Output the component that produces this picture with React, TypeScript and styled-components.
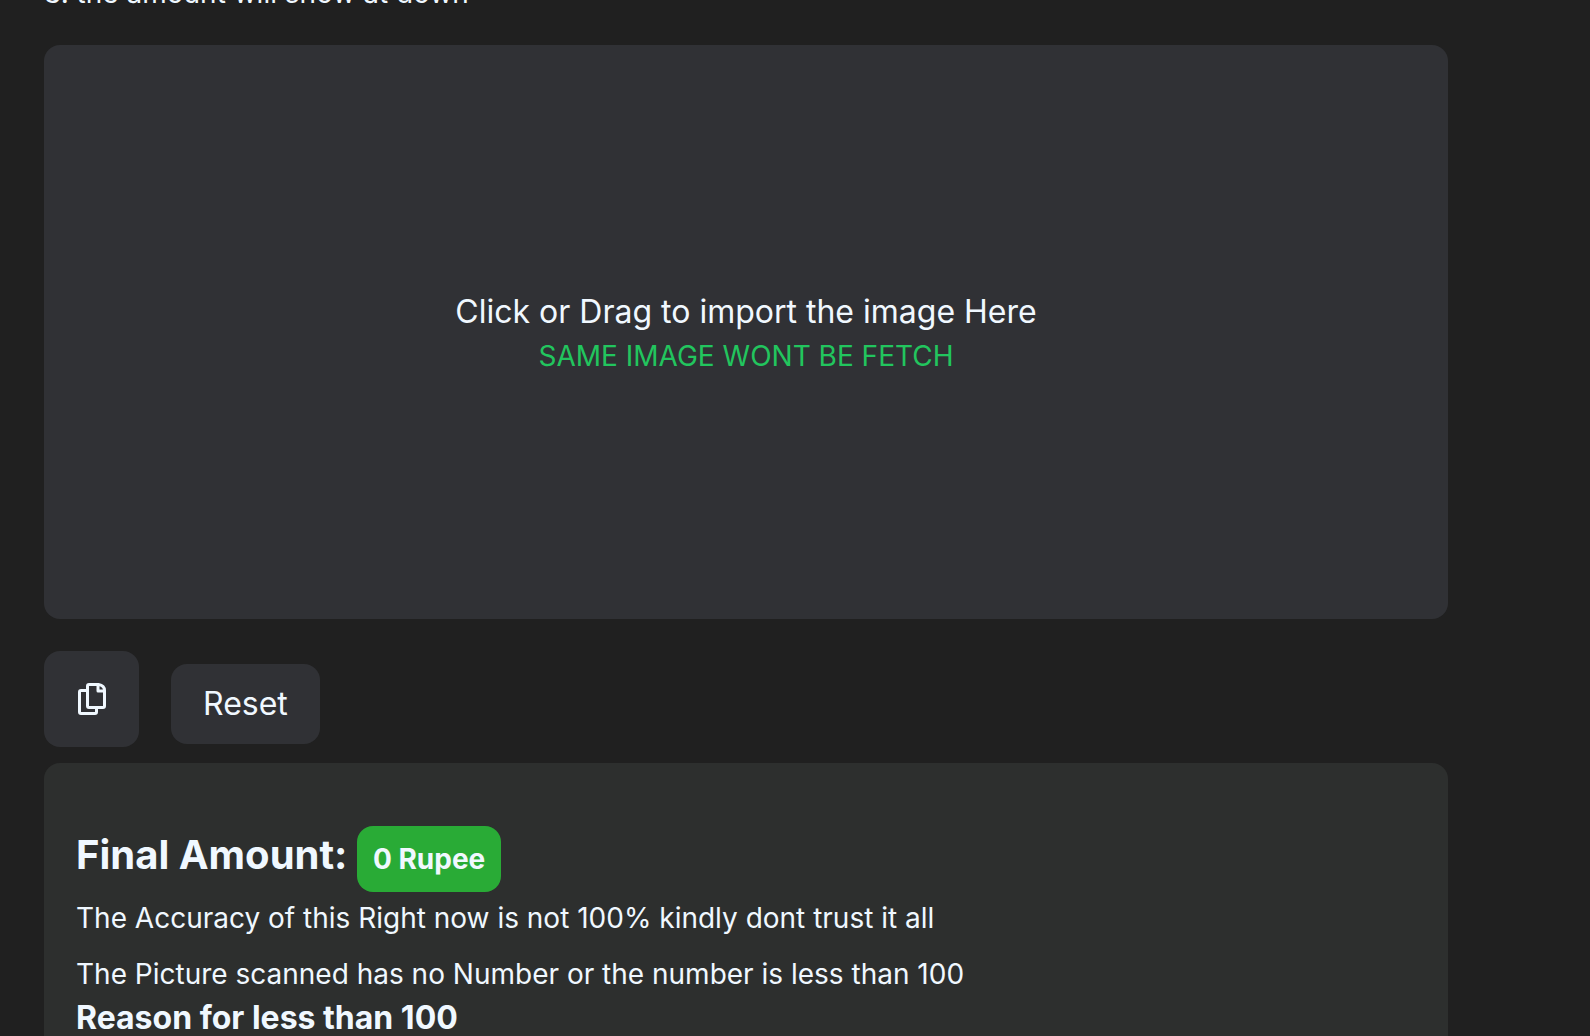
import React, { useState } from "react";
import styled, { createGlobalStyle } from "styled-components";

const GlobalStyle = createGlobalStyle`
  *, *::before, *::after { box-sizing: border-box; }
  html, body, #root { height: 100%; }
  body {
    margin: 0;
    overflow: hidden;
    background: #202020;
    color: aliceblue;
    font-family: Inter, "Liberation Sans", sans-serif;
    font-size: 28px;
    line-height: 40px;
  }
`;

const Viewport = styled.div`
  height: 100%;
  overflow: hidden;
`;

const Page = styled.main`
  display: flex;
  flex-direction: column;
  margin-top: -27px;
  padding: 0 142px 0 44px;
`;

const Step = styled.p`
  margin: 0 0 32px;
`;

const DropZone = styled.label`
  display: flex;
  flex-direction: column;
  align-items: center;
  justify-content: center;
  min-height: 574px;
  border-radius: 16px;
  background: #303135;
  cursor: pointer;
`;

const FileInput = styled.input`
  position: absolute;
  width: 1px;
  height: 1px;
  opacity: 0;
`;

const DropTitle = styled.span`
  font-size: 32px;
  line-height: 48px;
`;

const DropNote = styled.span`
  color: #22c55e;
`;

const Actions = styled.div`
  display: flex;
  align-items: baseline;
  gap: 32px;
  margin: 32px 0 16px;
`;

const Button = styled.button`
  padding: 16px 32px;
  border: 0;
  border-radius: 16px;
  background: #303135;
  color: inherit;
  font: inherit;
  font-size: 32px;
  line-height: 48px;
  cursor: pointer;
`;

const IconButton = styled(Button)`
  padding: 32px;
  line-height: 0;
`;

const Result = styled.section`
  padding: 64px 32px;
  border-radius: 16px;
  background: #2d2f2e;
`;

const Total = styled.h1`
  margin: 0 0 15px;
  font-size: 40px;
  line-height: 56px;
  font-weight: 700;
`;

const Amount = styled.span`
  padding: 16px;
  border-radius: 16px;
  background: #29ab36;
  font-size: 28px;
  line-height: 40px;
`;

const Note = styled.p`
  margin: 0;

  & + & { margin-top: 16px; }
`;

const Reason = styled.h2`
  margin: 0;
  font-size: 32px;
  line-height: 48px;
  font-weight: 700;
`;

function CopyIcon() {
  return (
    <svg width="31" height="32" viewBox="0 0 31 32" fill="none" stroke="currentColor" strokeWidth="3" strokeLinejoin="round" aria-hidden="true">
      <path d="M11.5 7.5H5a1.5 1.5 0 0 0-1.5 1.5V29A1.5 1.5 0 0 0 5 30.5H19A1.5 1.5 0 0 0 20.5 29V25" />
      <path d="M13 1.5H22.5Q28.500 2.500 28.5 7.5V23A1.5 1.5 0 0 1 27 24.5H13A1.5 1.5 0 0 1 11.5 23V3A1.5 1.5 0 0 1 13 1.5Z" />
      <path d="M22 2V8H28" />
    </svg>
  );
}

export default function App() {
  const [amount, setAmount] = useState(0);

  return (
    <Viewport>
      <GlobalStyle />
      <Page>
        <Step>3. the amount will show at down</Step>
        <DropZone htmlFor="image">
          <FileInput id="image" type="file" accept="image/*" />
          <DropTitle>Click or Drag to import the image Here</DropTitle>
          <DropNote>SAME IMAGE WONT BE FETCH</DropNote>
        </DropZone>
        <Actions>
          <IconButton type="button" aria-label="Copy">
            <CopyIcon />
          </IconButton>
          <Button type="button" onClick={() => setAmount(0)}>Reset</Button>
        </Actions>
        <Result>
          <Total>
            Final Amount: <Amount>{amount} Rupee</Amount>
          </Total>
          <Note>The Accuracy of this Right now is not 100% kindly dont trust it all</Note>
          <Note>The Picture scanned has no Number or the number is less than 100</Note>
          <Reason>Reason for less than 100</Reason>
        </Result>
      </Page>
    </Viewport>
  );
}
